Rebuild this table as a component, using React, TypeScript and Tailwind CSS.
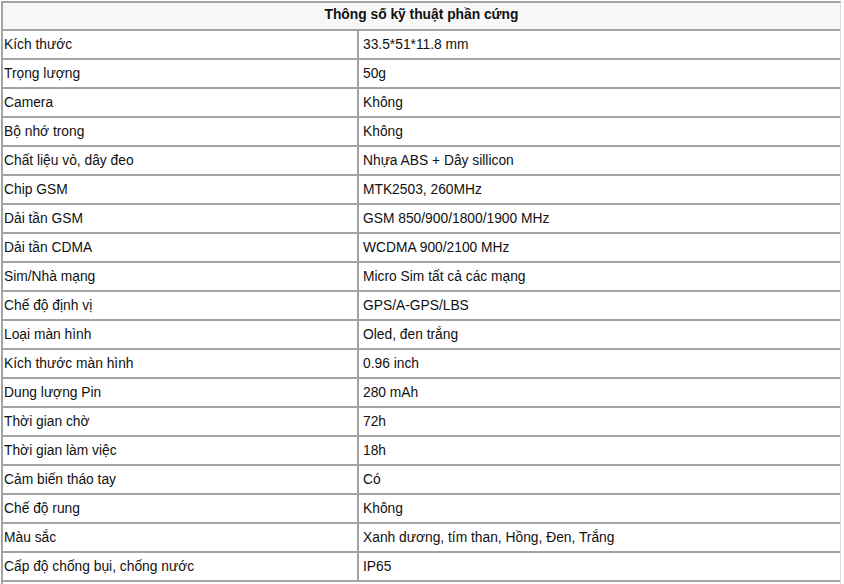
import React from "react";

const rows: [string, string][] = [
  ["Kích thước", "33.5*51*11.8 mm"],
  ["Trọng lượng", "50g"],
  ["Camera", "Không"],
  ["Bộ nhớ trong", "Không"],
  ["Chất liệu vỏ, dây đeo", "Nhựa ABS + Dây sillicon"],
  ["Chip GSM", "MTK2503, 260MHz"],
  ["Dải tần GSM", "GSM 850/900/1800/1900 MHz"],
  ["Dải tần CDMA", "WCDMA 900/2100 MHz"],
  ["Sim/Nhà mạng", "Micro Sim tất cả các mạng"],
  ["Chế độ định vị", "GPS/A-GPS/LBS"],
  ["Loại màn hình", "Oled, đen trắng"],
  ["Kích thước màn hình", "0.96 inch"],
  ["Dung lượng Pin", "280 mAh"],
  ["Thời gian chờ", "72h"],
  ["Thời gian làm việc", "18h"],
  ["Cảm biến tháo tay", "Có"],
  ["Chế độ rung", "Không"],
  ["Màu sắc", "Xanh dương, tím than, Hồng, Đen, Trắng"],
  ["Cấp độ chống bụi, chống nước", "IP65"],
];

export default function App() {
  return (
    <div
      className="w-[844px] h-[584px] overflow-hidden bg-white text-[13.8px] text-[#111]"
      style={{ fontFamily: '"Liberation Sans", Arial, sans-serif' }}
    >
      <div className="ml-px mt-px w-[840px] border-l-2 border-t-2 border-r border-l-[#a3a3a3] border-t-[#a3a3a3] border-r-[#dcdcdc]">
        <div className="h-[28px] border-b-2 border-[#a3a3a3] bg-[#f7f7f7] flex items-center justify-center font-bold pb-px">
          Thông số kỹ thuật phần cứng
        </div>
        {rows.map(([k, v]) => (
          <div key={k} className="h-[29px] border-b-2 border-[#a3a3a3] flex">
            <div className="w-[356px] border-r-2 border-[#a3a3a3] flex items-center pl-px pt-px">
              {k}
            </div>
            <div className="flex-1 flex items-center pl-[4px] pt-px">{v}</div>
          </div>
        ))}
        <div className="h-[29px] flex" />
      </div>
    </div>
  );
}
